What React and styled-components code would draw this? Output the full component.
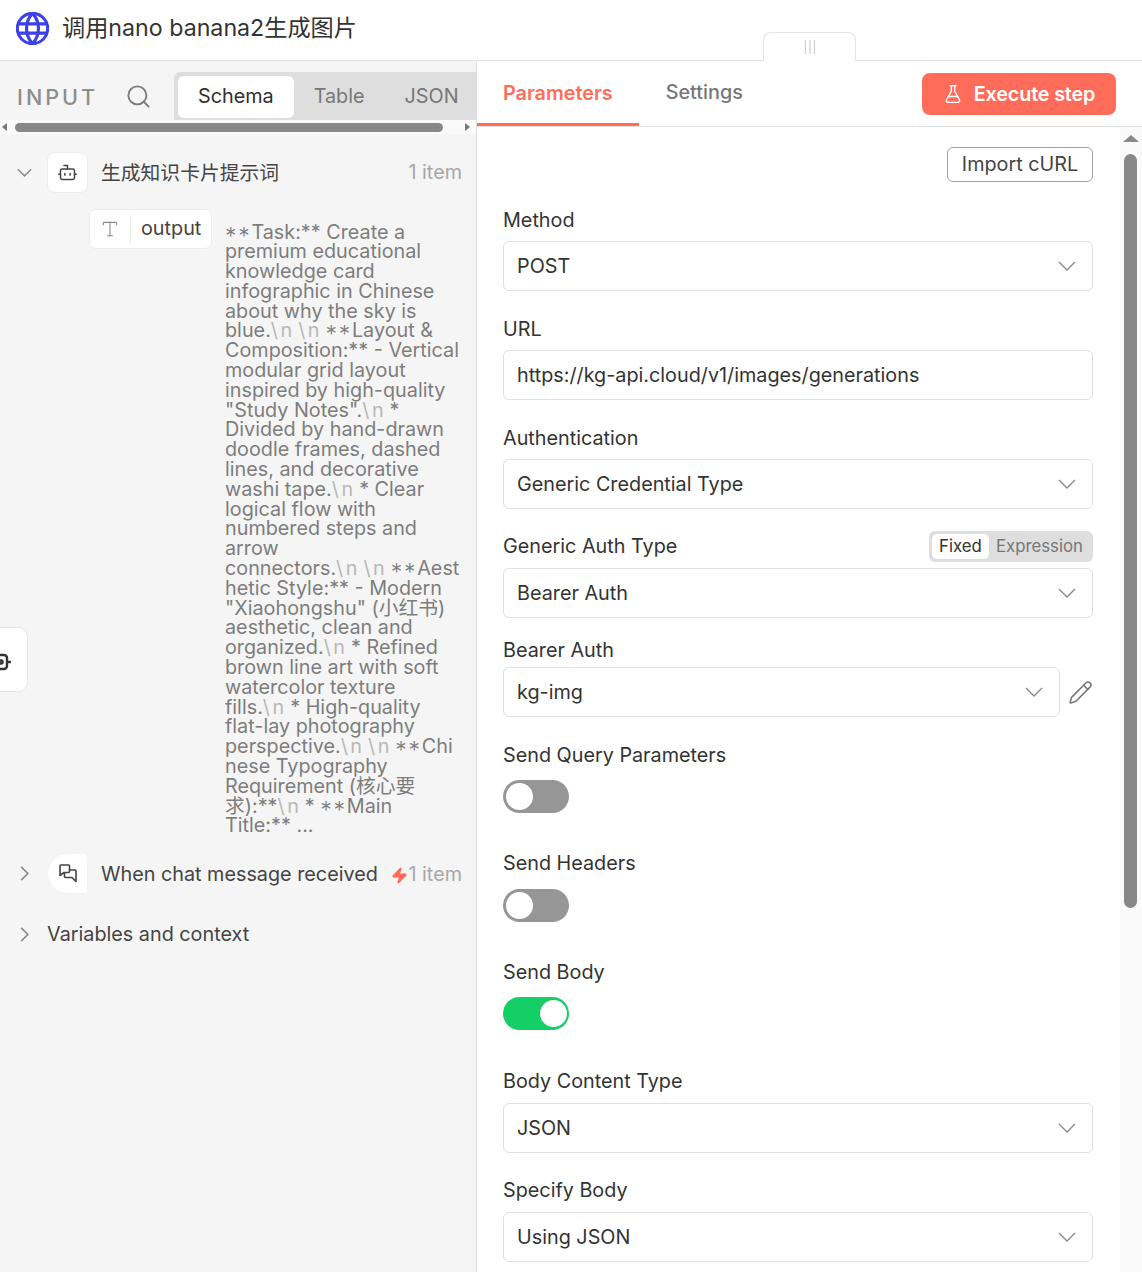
import React from 'react';
import styled, { createGlobalStyle } from 'styled-components';
import { Bot, FlaskConical, Pencil, Search, Type, Zap } from 'lucide-react';

const GlobalStyle = createGlobalStyle`
	html, body {
		margin: 0;
		padding: 0;
		height: 100%;
		overflow: hidden;
	}
	body {
		font-family: Inter, 'Noto Sans CJK SC', sans-serif;
		color: #333;
		background: #fff;
	}
`;

const Chevron = ({ dir = 'down', size = 18, weight = 1.3 }) => (
	<svg width={size} height={size} viewBox='0 0 18 18' fill='none' stroke='currentColor' strokeWidth={weight}>
		{dir === 'down' ? <polyline points='1,5 9,13 17,5' /> : <polyline points='5,1 13,9 5,17' />}
	</svg>
);

const Select = ({ value, short }) => (
	<SelectBox $short={short}>
		{value}
		<SelectArrow>
			<Chevron />
		</SelectArrow>
	</SelectBox>
);

const Switch = ({ on }) => (
	<SwitchTrack $on={on}>
		<SwitchKnob />
	</SwitchTrack>
);

const Newline = () => <NewlineMark>\n</NewlineMark>;

export default function App() {
	return (
		<Page>
			<GlobalStyle />
			<Header>
				<svg width='33' height='33' viewBox='2 2 20 20' fill='none' stroke='#3a42e6' strokeWidth='1.9'>
					<circle cx='12' cy='12' r='9.2' />
					<path d='M12 2.8a13.5 13.5 0 0 1 0 18.4a13.5 13.5 0 0 1 0-18.4' />
					<path d='M3 9.2h18M3 14.8h18' />
				</svg>
				<Title>调用nano banana2生成图片</Title>
			</Header>
			<DragTab>
				<svg width='12' height='14' viewBox='0 0 12 14' stroke='#cfcfcf' strokeWidth='1.2'>
					<path d='M1.5 0v14M6 0v14M10.5 0v14' />
				</svg>
			</DragTab>
			<Columns>
				<InputPanel>
					<InputTop>
						<InputLabel>INPUT</InputLabel>
						<SearchButton>
							<Search size={27} strokeWidth={1.7} />
						</SearchButton>
						<ViewTabs>
							<ViewTab $active>Schema</ViewTab>
							<ViewTab>Table</ViewTab>
							<ViewTab>JSON</ViewTab>
						</ViewTabs>
					</InputTop>
					<HScroll>
						<ArrowLeft />
						<HThumb />
						<ArrowRight />
					</HScroll>
					<Tree>
						<TreeRow>
							<Toggle>
								<Chevron size={15} weight={1.8} />
							</Toggle>
							<NodeIcon>
								<Bot size={21} strokeWidth={1.7} />
							</NodeIcon>
							<NodeName>生成知识卡片提示词</NodeName>
							<ItemCount $lift>1 item</ItemCount>
						</TreeRow>
						<OutputRow>
							<Pill>
								<PillIcon>
									<Type size={20} strokeWidth={1.3} />
								</PillIcon>
								<PillName>output</PillName>
							</Pill>
							<Blob>
								<Stars>**</Stars>Task:** Create a premium educational knowledge card infographic in Chinese about why the sky is blue.
								<Newline /><Newline /><Stars>**</Stars>Layout &amp; Composition:** - Vertical modular grid layout inspired by high-quality "Study Notes".
								<Newline />* Divided by hand-drawn doodle frames, dashed lines, and decorative washi tape.
								<Newline />* Clear logical flow with numbered steps and arrow connectors.
								<Newline /><Newline /><Stars>**</Stars>Aesthetic Style:** - Modern "Xiaohongshu" (小红书) aesthetic, clean and organized.
								<Newline />* Refined brown line art with soft watercolor texture fills.
								<Newline />* High-quality flat-lay photography perspective.
								<Newline /><Newline /><Stars>**</Stars>Chinese Typography Requirement (核心要求):**
								<Newline />* <Stars>**</Stars>Main Title:** ...
							</Blob>
						</OutputRow>
						<TriggerRow>
							<Toggle>
								<Chevron dir='right' size={15} weight={2} />
							</Toggle>
							<TriggerIcon>
								<svg width='18' height='19' viewBox='0 0 18 19' fill='none' stroke='#444' strokeWidth='1.6' strokeLinejoin='round'>
									<path d='M1 2a1 1 0 0 1 1-1h7.5a1 1 0 0 1 1 1v5.5a1 1 0 0 1-1 1H5L1 11.5z' />
									<path d='M10.5 6H16a1 1 0 0 1 1 1v10.5l-4-4H6.500a1 1 0 0 1-1-1V8.500' />
								</svg>
							</TriggerIcon>
							<TriggerName>When chat message received</TriggerName>
							<Bolt>
								<Zap size={17} fill='#ff6d5a' stroke='#ff6d5a' />
							</Bolt>
							<ItemCount>1 item</ItemCount>
						</TriggerRow>
						<ContextRow>
							<Toggle>
								<Chevron dir='right' size={15} weight={2} />
							</Toggle>
							Variables and context
						</ContextRow>
					</Tree>
					<SideHandle>
						<svg width='12' height='20' viewBox='0 0 12 20' fill='none' stroke='#333' strokeWidth='2.4'>
							<rect x='-8' y='3' width='15' height='14' rx='3' />
							<circle cx='1' cy='10' r='1.6' />
							<path d='M7 10h4' />
						</svg>
					</SideHandle>
				</InputPanel>
				<MainPanel>
					<TabBar>
						<MainTab $active>Parameters</MainTab>
						<MainTab>Settings</MainTab>
						<ExecuteButton>
							<FlaskConical size={20} strokeWidth={1.7} />
							Execute step
						</ExecuteButton>
					</TabBar>
					<Body>
						<Form>
							<ImportRow>
								<ImportButton>Import cURL</ImportButton>
							</ImportRow>
							<Field $top={28}>
								<FieldLabel>Method</FieldLabel>
								<Select value='POST' />
							</Field>
							<Field>
								<FieldLabel>URL</FieldLabel>
								<TextInput>https://kg-api.cloud/v1/images/generations</TextInput>
							</Field>
							<Field>
								<FieldLabel>Authentication</FieldLabel>
								<Select value='Generic Credential Type' />
							</Field>
							<Field $top={22}>
								<LabelRow>
									<span>Generic Auth Type</span>
									<ModeSwitch>
										<ModeOption $active>Fixed</ModeOption>
										<ModeOption>Expression</ModeOption>
									</ModeSwitch>
								</LabelRow>
								<Select value='Bearer Auth' />
							</Field>
							<Field $top={22} $below={27}>
								<FieldLabel>Bearer Auth</FieldLabel>
								<CredentialRow>
									<Select value='kg-img' short />
									<PencilButton>
										<Pencil size={25} strokeWidth={1.5} />
									</PencilButton>
								</CredentialRow>
							</Field>
							<Field $below={35}>
								<FieldLabel>Send Query Parameters</FieldLabel>
								<Switch />
							</Field>
							<Field $top={40} $below={36}>
								<FieldLabel>Send Headers</FieldLabel>
								<Switch />
							</Field>
							<Field $top={40} $below={35}>
								<FieldLabel>Send Body</FieldLabel>
								<Switch on />
							</Field>
							<Field $top={41} $below={32}>
								<FieldLabel>Body Content Type</FieldLabel>
								<Select value='JSON' />
							</Field>
							<Field $top={27} $below={32}>
								<FieldLabel>Specify Body</FieldLabel>
								<Select value='Using JSON' />
							</Field>
						</Form>
						<VScroll>
							<ArrowUp />
							<VThumb />
						</VScroll>
					</Body>
				</MainPanel>
			</Columns>
		</Page>
	);
}

const Page = styled.div`
	position: relative;
	display: flex;
	flex-direction: column;
	height: 100vh;
	overflow: hidden;
`;

const Header = styled.header`
	flex: none;
	display: flex;
	align-items: center;
	gap: 14px;
	box-sizing: border-box;
	height: 61px;
	padding: 0 16px 3px;
	border-bottom: 1px solid #e0e0e0;
`;

const Title = styled.div`
	font-size: 23.2px;
	margin-bottom: 5px;
	margin-left: -1px;
	color: #333;
`;

const DragTab = styled.div`
	position: absolute;
	left: 763px;
	top: 32px;
	box-sizing: border-box;
	width: 93px;
	height: 29px;
	display: flex;
	align-items: center;
	justify-content: center;
	background: #fff;
	border: 1px solid #e4e4e4;
	border-bottom: 0;
	border-radius: 8px 8px 0 0;
`;

const Columns = styled.div`
	flex: 1;
	min-height: 0;
	display: flex;
`;

const InputPanel = styled.section`
	flex: none;
	box-sizing: border-box;
	width: 477px;
	background: #f5f5f5;
	border-right: 1px solid #e0e0e0;
	display: flex;
	flex-direction: column;
	overflow: hidden;
`;

const InputTop = styled.div`
	flex: none;
	height: 59px;
	display: flex;
	align-items: flex-start;
	padding-left: 17px;
	overflow: hidden;
`;

const InputLabel = styled.div`
	flex: none;
	margin-top: 23px;
	width: 107px;
	font-size: 21.6px;
	line-height: 26px;
	font-weight: 500;
	letter-spacing: 3px;
	color: #8d8d8d;
`;

const SearchButton = styled.div`
	flex: none;
	box-sizing: border-box;
	width: 50px;
	margin-top: 22px;
	padding-left: 1px;
	color: #7c7c7c;
`;

const ViewTabs = styled.div`
	flex: none;
	display: flex;
	box-sizing: border-box;
	width: 310px;
	height: 56px;
	margin-top: 11px;
	padding: 4px;
	background: #dedede;
	border-radius: 6px;
`;

const ViewTab = styled.div`
	height: 42px;
	line-height: 41px;
	padding: 0 20px;
	font-size: 19.8px;
	border-radius: 6px;
	color: ${(p) => (p.$active ? '#2f2f2f' : '#777')};
	background: ${(p) => (p.$active ? '#fff' : 'transparent')};
`;

const HScroll = styled.div`
	flex: none;
	position: relative;
	height: 14px;
	background: #fafafa;
`;

const HThumb = styled.div`
	position: absolute;
	left: 15px;
	top: 3px;
	width: 428px;
	height: 9px;
	border-radius: 5px;
	background: #888;
`;

const ArrowLeft = styled.div`
	position: absolute;
	left: 2px;
	top: 3px;
	border: 4px solid transparent;
	border-left: 0;
	border-right: 5px solid #777;
`;

const ArrowRight = styled.div`
	position: absolute;
	left: 465px;
	top: 3px;
	border: 4px solid transparent;
	border-right: 0;
	border-left: 5px solid #777;
`;

const Tree = styled.div`
	padding: 18px 14px 0 17px;
`;

const TreeRow = styled.div`
	display: flex;
	align-items: center;
	height: 41px;
`;

const Toggle = styled.div`
	flex: none;
	width: 30px;
	display: flex;
	color: #8a8a8a;
`;

const NodeIcon = styled.div`
	flex: none;
	box-sizing: border-box;
	width: 41px;
	height: 41px;
	display: flex;
	align-items: center;
	justify-content: center;
	background: #fff;
	border: 1px solid #ececec;
	border-radius: 8px;
	color: #444;
`;

const TriggerIcon = styled(NodeIcon)`
	border-color: #f2f2f2;
	border-radius: 50% 4px 4px 50%;
`;

const NodeName = styled.div`
	flex: 1;
	margin: 0 0 2px 13px;
	font-size: 19.8px;
	color: #444;
`;

const TriggerName = styled.div`
	margin-left: 13px;
	font-size: 19.8px;
	color: #444;
`;

const ItemCount = styled.div`
	flex: none;
	margin-bottom: ${(p) => (p.$lift ? 2 : 0)}px;
	font-size: 19.8px;
	color: #a8a8a8;
`;

const Bolt = styled.div`
	flex: 1;
	display: flex;
	justify-content: flex-end;
	padding-top: 3px;
	color: #ff6d5a;
`;

const OutputRow = styled.div`
	display: flex;
	align-items: flex-start;
	gap: 13px;
	margin: 16px 0 0 72px;
`;

const Pill = styled.div`
	flex: none;
	box-sizing: border-box;
	width: 123px;
	height: 40px;
	display: flex;
	align-items: center;
	background: #fff;
	border: 1px solid #ececec;
	border-radius: 7px;
`;

const PillIcon = styled.div`
	box-sizing: border-box;
	width: 41px;
	height: 28px;
	display: flex;
	align-items: center;
	justify-content: center;
	border-right: 1px solid #ececec;
	color: #8a8a8a;
`;

const PillName = styled.div`
	margin: 0 0 2px 10px;
	font-size: 19.8px;
	color: #444;
`;

const Blob = styled.div`
	margin-top: 13.5px;
	width: 238px;
	font-size: 19.8px;
	line-height: 19.8px;
	color: #7d7d7d;
	overflow-wrap: anywhere;
`;

const Stars = styled.span`
	position: relative;
	top: 5px;
	font-size: 23px;
	font-weight: 300;
	line-height: 0;
	letter-spacing: 1.7px;
`;

const NewlineMark = styled.span`
	color: #b8b8b8;
	letter-spacing: 2.5px;
	padding-right: 3.5px;
`;

const TriggerRow = styled(TreeRow)`
	margin-top: 17px;
`;

const ContextRow = styled.div`
	display: flex;
	align-items: center;
	margin-top: 29px;
	height: 22px;
	font-size: 19.8px;
	color: #444;
`;

const SideHandle = styled.div`
	position: absolute;
	left: -1px;
	top: 627px;
	box-sizing: border-box;
	width: 29px;
	height: 65px;
	padding-top: 5px;
	display: flex;
	align-items: center;
	background: #fff;
	border: 1px solid #e6e6e6;
	border-radius: 0 10px 10px 0;
`;

const MainPanel = styled.section`
	flex: 1;
	min-width: 0;
	display: flex;
	flex-direction: column;
`;

const TabBar = styled.div`
	flex: none;
	box-sizing: border-box;
	height: 66px;
	display: flex;
	align-items: flex-start;
	border-bottom: 1px solid #e0e0e0;
`;

const MainTab = styled.div`
	box-sizing: border-box;
	height: 65px;
	padding: ${(p) => (p.$active ? '20px 26px 0' : '19px 27px 0')};
	font-size: 19.8px;
	line-height: 24px;
	font-weight: ${(p) => (p.$active ? 600 : 500)};
	color: ${(p) => (p.$active ? '#ff6d5a' : '#777')};
	border-bottom: 3px solid ${(p) => (p.$active ? '#ff6d5a' : 'transparent')};
`;

const ExecuteButton = styled.div`
	margin: 12px 26px 0 auto;
	width: 194px;
	height: 42px;
	display: flex;
	align-items: center;
	justify-content: center;
	gap: 11px;
	background: #ff6d5a;
	border-radius: 8px;
	color: #fff;
	font-size: 19.8px;
	font-weight: 600;
	letter-spacing: -0.15px;
`;

const Body = styled.div`
	flex: 1;
	min-height: 0;
	display: flex;
`;

const Form = styled.div`
	flex: 1;
	min-width: 0;
	padding: 20px 27px 0 26px;
`;

const ImportRow = styled.div`
	display: flex;
	justify-content: flex-end;
`;

const ImportButton = styled.div`
	box-sizing: border-box;
	width: 146px;
	height: 35px;
	line-height: 32px;
	text-align: center;
	font-size: 19.8px;
	color: #444;
	border: 1px solid #a3a3a3;
	border-radius: 6px;
`;

const Field = styled.div`
	margin-top: ${(p) => p.$top ?? 28}px;

	& > :first-child {
		margin-bottom: ${(p) => p.$below ?? 31}px;
	}
`;

const FieldLabel = styled.div`
	height: 0;
	font-size: 19.8px;
	line-height: 20px;
	color: #333;
`;

const LabelRow = styled.div`
	display: flex;
	align-items: center;
	justify-content: space-between;
	height: 31px;
	font-size: 19.8px;
	color: #333;
	&& {
		margin-bottom: 6px;
	}
	& > span {
		padding-bottom: 2px;
	}
`;

const ModeSwitch = styled.div`
	display: flex;
	box-sizing: border-box;
	height: 31px;
	padding: 3px;
	background: #dedede;
	border-radius: 6px;
`;

const ModeOption = styled.div`
	height: 25px;
	line-height: 24px;
	padding: 0 7px;
	font-size: 16.8px;
	border-radius: 5px;
	color: ${(p) => (p.$active ? '#333' : '#777')};
	background: ${(p) => (p.$active ? '#fff' : 'transparent')};
`;

const SelectBox = styled.div`
	position: relative;
	box-sizing: border-box;
	flex: 1;
	height: 50px;
	line-height: 49px;
	padding-left: 13px;
	font-size: 19.8px;
	color: #333;
	background: #fff;
	border: 1px solid #e0e0e0;
	border-radius: 6px;
`;

const SelectArrow = styled.div`
	position: absolute;
	right: 16px;
	top: 15px;
	height: 18px;
	line-height: 0;
	color: #888;
`;

const TextInput = styled(SelectBox)``;

const CredentialRow = styled.div`
	display: flex;
	align-items: center;
`;

const PencilButton = styled.div`
	flex: none;
	width: 33px;
	display: flex;
	justify-content: flex-end;
	color: #777;
`;

const SwitchTrack = styled.div`
	position: relative;
	width: 66px;
	height: 33px;
	border-radius: 17px;
	background: ${(p) => (p.$on ? '#13cf66' : '#969696')};
	& > div {
		left: ${(p) => (p.$on ? '37px' : '3px')};
	}
`;

const SwitchKnob = styled.div`
	position: absolute;
	top: 3px;
	width: 27px;
	height: 27px;
	border-radius: 50%;
	background: #fff;
`;

const VScroll = styled.div`
	flex: none;
	position: relative;
	width: 22px;
	background: #fafafa;
`;

const ArrowUp = styled.div`
	position: absolute;
	left: 3px;
	top: 8px;
	border: 8px solid transparent;
	border-top: 0;
	border-bottom: 7px solid #888;
`;

const VThumb = styled.div`
	position: absolute;
	left: 4px;
	top: 27px;
	width: 13px;
	height: 754px;
	border-radius: 7px;
	background: #888;
`;
